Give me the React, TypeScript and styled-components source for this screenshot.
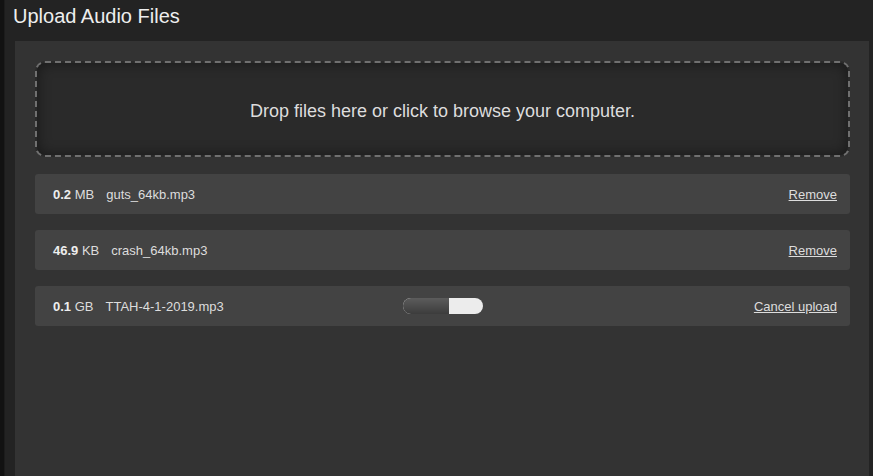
import styled, { createGlobalStyle } from "styled-components";

interface UploadFile {
  size: string;
  unit: string;
  name: string;
  progress?: number;
}

const files: UploadFile[] = [
  { size: "0.2", unit: "MB", name: "guts_64kb.mp3" },
  { size: "46.9", unit: "KB", name: "crash_64kb.mp3" },
  { size: "0.1", unit: "GB", name: "TTAH-4-1-2019.mp3", progress: 57 },
];

export default function App() {
  return (
    <>
      <GlobalStyle />
      <Page>
        <EdgeStrip />
        <Main>
          <Title>Upload Audio Files</Title>
          <Panel>
            <DropZone>Drop files here or click to browse your computer.</DropZone>
            <FileList>
              {files.map((file) => (
                <FileRow key={file.name}>
                  <FileInfo>
                    <strong>{file.size}</strong> {file.unit}
                    <FileName>{file.name}</FileName>
                  </FileInfo>
                  {file.progress !== undefined && (
                    <ProgressTrack>
                      <ProgressFill style={{ width: `${file.progress}%` }} />
                    </ProgressTrack>
                  )}
                  <RowLink href="#">
                    {file.progress !== undefined ? "Cancel upload" : "Remove"}
                  </RowLink>
                </FileRow>
              ))}
            </FileList>
          </Panel>
        </Main>
      </Page>
    </>
  );
}

const GlobalStyle = createGlobalStyle`
  html, body {
    margin: 0;
    padding: 0;
    background: #232323;
  }
  body {
    font-family: "Liberation Sans", Arial, sans-serif;
    color: #ddd;
  }
`;

const Page = styled.div`
  display: flex;
  width: 873px;
  height: 476px;
  overflow: hidden;
  background: #232323;
`;

const EdgeStrip = styled.div`
  width: 4px;
  flex-shrink: 0;
  background: #121212;
  border-right: 1px solid #1c1c1c;
`;

const Main = styled.div`
  flex: 1;
  display: flex;
  flex-direction: column;
  padding: 0 4px 0 10px;
`;

const Title = styled.h1`
  margin: 0 0 0 -2px;
  height: 41px;
  padding-top: 5px;
  box-sizing: border-box;
  font-size: 20px;
  font-weight: normal;
  color: #eee;
`;

const Panel = styled.div`
  flex: 1;
  background: #333;
  padding: 20px 19px 0 20px;
`;

const DropZone = styled.div`
  height: 96px;
  box-sizing: border-box;
  display: flex;
  align-items: center;
  justify-content: center;
  padding-top: 4px;
  border: 2px dashed #707070;
  border-radius: 10px;
  background: #2a2a2a;
  box-shadow: inset 0 0 14px rgba(0, 0, 0, 0.45);
  font-size: 18px;
  color: #ddd;
  cursor: pointer;
`;

const FileList = styled.div`
  display: flex;
  flex-direction: column;
  gap: 16px;
  margin-top: 17px;
`;

const FileRow = styled.div`
  position: relative;
  height: 40px;
  display: flex;
  align-items: center;
  justify-content: space-between;
  padding: 0 13px 0 18px;
  background: #434343;
  border-radius: 3px;
  font-size: 13px;
`;

const FileInfo = styled.div`
  color: #ddd;
  strong {
    color: #eee;
  }
`;

const FileName = styled.span`
  margin-left: 12px;
`;

const ProgressTrack = styled.div`
  position: absolute;
  left: 368px;
  top: 12px;
  width: 80px;
  height: 16px;
  border-radius: 8px;
  background: #ececec;
  overflow: hidden;
`;

const ProgressFill = styled.div`
  height: 100%;
  background: linear-gradient(#5c5c5c, #3c3c3c);
`;

const RowLink = styled.a`
  color: #ddd;
  text-decoration: underline;
`;
